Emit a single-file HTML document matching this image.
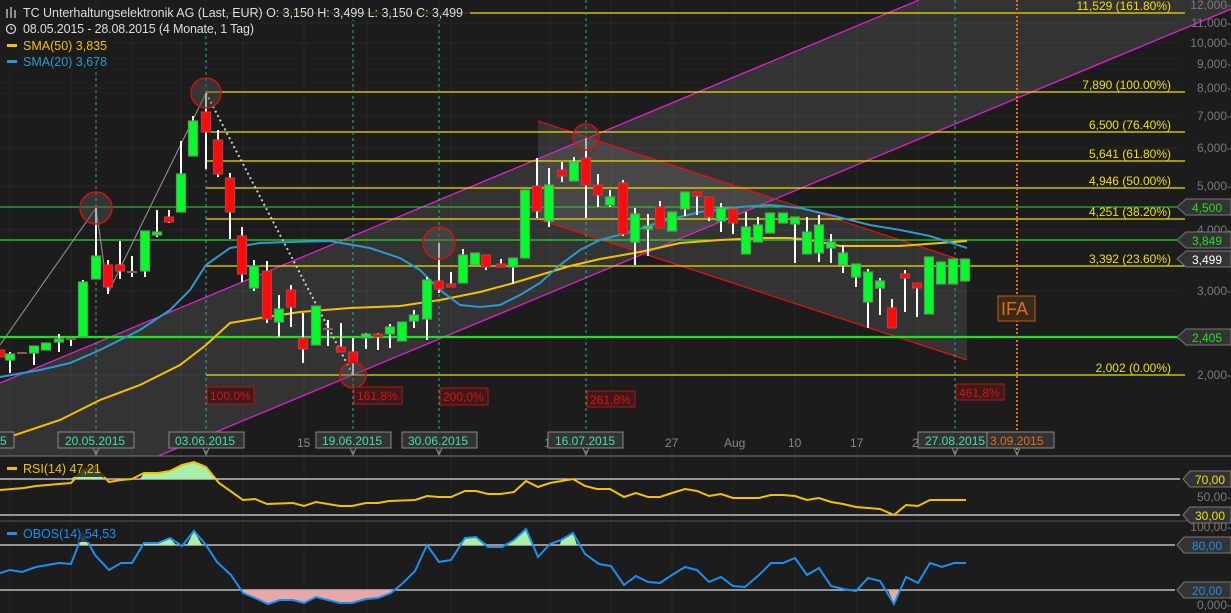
<!DOCTYPE html>
<html><head><meta charset="utf-8">
<style>
html,body{margin:0;padding:0;background:#1c1c1c;overflow:hidden;}
svg{display:block;font-family:"Liberation Sans",sans-serif;}
</style></head>
<body>
<svg id="s" width="1231" height="613" viewBox="0 0 1231 613" xmlns="http://www.w3.org/2000/svg">
<defs><clipPath id="main"><rect x="0" y="0" width="1231" height="456"/></clipPath></defs>
<rect width="1231" height="613" fill="#1c1c1c"/>
<g id="grid" stroke="#262626" stroke-width="1"></g>
<g clip-path="url(#main)">
<polygon points="0,383 919,0 1231,0 1231,9 0,522" fill="#ffffff" fill-opacity="0.1"/>
<polygon points="538,121 967,262 967,360 538,219" fill="#ffffff" fill-opacity="0.1"/>
<line x1="0" y1="383" x2="919" y2="0" stroke="#e020d0" stroke-width="1.3"/>
<line x1="0" y1="522" x2="1231" y2="9" stroke="#e020d0" stroke-width="1.3"/>
</g>
<line x1="538" y1="121" x2="967" y2="262" stroke="#e01010" stroke-width="1.3"/>
<line x1="538" y1="219" x2="967" y2="360" stroke="#e01010" stroke-width="1.3"/>
<g stroke="#f0e000" stroke-width="1.3">
<line x1="213" y1="13" x2="1185" y2="13"/>
<line x1="206" y1="92" x2="1185" y2="92"/>
<line x1="206" y1="132" x2="1185" y2="132"/>
<line x1="206" y1="161" x2="1185" y2="161"/>
<line x1="206" y1="188" x2="1185" y2="188"/>
<line x1="206" y1="219" x2="1185" y2="219"/>
<line x1="206" y1="266" x2="1185" y2="266"/>
<line x1="206" y1="375" x2="1185" y2="375"/>
</g>
<g stroke="#22e022">
<line x1="0" y1="207" x2="1180" y2="207" stroke-width="1"/>
<line x1="0" y1="240" x2="1180" y2="240" stroke-width="1.3"/>
<line x1="0" y1="337" x2="1180" y2="337" stroke-width="2.2"/>
</g>
<g stroke="#3aa890" stroke-width="1" stroke-dasharray="3,3">
<line x1="96" y1="0" x2="96" y2="455"/><line x1="206" y1="0" x2="206" y2="455"/>
<line x1="353" y1="0" x2="353" y2="455"/><line x1="439" y1="0" x2="439" y2="455"/>
<line x1="586" y1="0" x2="586" y2="455"/><line x1="955" y1="0" x2="955" y2="455"/>
</g>
<line x1="1017" y1="0" x2="1017" y2="455" stroke="#e07010" stroke-width="2" stroke-dasharray="2,2"/>
<polyline points="0,345 96,208 108,293 206,93" fill="none" stroke="#999" stroke-width="1"/>
<line x1="206" y1="93" x2="353" y2="375" stroke="#ccc" stroke-width="2" stroke-dasharray="2,3"/>
<polyline fill="none" stroke="#f5c000" stroke-width="2" points="0,440 60,420 100,400 140,385 180,365 206,345 230,323 260,318 300,312 350,308 400,306 440,300 480,292 510,284 540,275 570,266 600,259 640,252 680,243 720,240 760,238 790,238 810,240 840,246 900,246 967,241"/>
<polyline fill="none" stroke="#2a9ad0" stroke-width="2" points="0,377 40,370 70,363 100,350 140,330 170,310 190,290 206,265 230,248 260,243 290,242 330,241 370,248 400,258 420,270 440,290 460,305 480,307 500,305 520,295 540,283 560,265 580,250 600,240 630,232 660,222 700,212 740,207 770,205 800,208 830,215 850,220 870,225 900,230 930,236 967,248"/>
<g id="candles"></g>
<g fill="#555" fill-opacity="0.45" stroke="#d01010" stroke-width="1.5">
<circle cx="96" cy="208" r="16"/><circle cx="206" cy="93" r="15"/>
<circle cx="353" cy="375" r="13"/><circle cx="439" cy="243" r="16"/><circle cx="586" cy="137" r="13"/>
</g>
<g font-size="12" fill="#e01010">
<rect x="207" y="387" width="47" height="17" fill="#3a1a1a" stroke="#c01010"/><text x="210" y="400">100,0%</text>
<rect x="354" y="387" width="48" height="17" fill="#3a1a1a" stroke="#c01010"/><text x="357" y="400">161,8%</text>
<rect x="440" y="388" width="48" height="17" fill="#3a1a1a" stroke="#c01010"/><text x="443" y="401">200,0%</text>
<rect x="587" y="391" width="48" height="16" fill="#3a1a1a" stroke="#c01010"/><text x="590" y="404">261,8%</text>
<rect x="956" y="384" width="48" height="16" fill="#3a1a1a" stroke="#c01010"/><text x="959" y="397">461,8%</text>
</g>
<rect x="998" y="296" width="37" height="25" fill="#3a2a1a" stroke="#c05a10"/>
<text x="1001" y="315" font-size="18" fill="#e07010">IFA</text>
<g font-size="12" fill="#f0e000" text-anchor="end">
<text x="1171" y="10">11,529 (161.80%)</text>
<text x="1171" y="89">7,890 (100.00%)</text>
<text x="1171" y="129">6,500 (76.40%)</text>
<text x="1171" y="158">5,641 (61.80%)</text>
<text x="1171" y="185">4,946 (50.00%)</text>
<text x="1171" y="216">4,251 (38.20%)</text>
<text x="1171" y="263">3,392 (23.60%)</text>
<text x="1171" y="372">2,002 (0.00%)</text>
</g>
<g font-size="12" fill="#7a7a7a" text-anchor="end">
<text x="1231" y="9">12,000-</text><text x="1231" y="27">11,000-</text><text x="1231" y="47">10,000-</text>
<text x="1231" y="68">9,000-</text><text x="1231" y="92">8,000-</text><text x="1231" y="120">7,000-</text>
<text x="1231" y="152">6,000-</text><text x="1231" y="190">5,000-</text><text x="1231" y="234">4,000-</text>
<text x="1231" y="295">3,000-</text><text x="1231" y="379">2,000-</text>
</g>
<g font-size="12">
<path d="M1177,207 L1186,199 L1231,199 L1231,215 L1186,215 Z" fill="#333" stroke="#777"/><text x="1192" y="212" fill="#22e022">4,500</text>
<path d="M1177,240 L1186,232 L1231,232 L1231,248 L1186,248 Z" fill="#333" stroke="#777"/><text x="1192" y="245" fill="#22e022">3,849</text>
<path d="M1177,259 L1186,251 L1231,251 L1231,267 L1186,267 Z" fill="#333" stroke="#777"/><text x="1192" y="264" fill="#fff">3,499</text>
<path d="M1177,337 L1186,329 L1231,329 L1231,345 L1186,345 Z" fill="#333" stroke="#777"/><text x="1192" y="342" fill="#22e022">2,405</text>
</g>
<rect x="0" y="0" width="470" height="20" fill="#1c1c1c" fill-opacity="0.85"/>
<rect x="0" y="20" width="260" height="16" fill="#1c1c1c" fill-opacity="0.85"/>
<rect x="0" y="36" width="112" height="32" fill="#1c1c1c" fill-opacity="0.85"/>
<g stroke="#ddd" stroke-width="1.2"><line x1="7" y1="9" x2="7" y2="18"/><line x1="11" y1="7" x2="11" y2="18"/><line x1="15" y1="10" x2="15" y2="18"/></g>
<circle cx="11" cy="29" r="4.5" fill="none" stroke="#ddd" stroke-width="1.2"/><path d="M11,26.5 V29 H13" fill="none" stroke="#ddd"/>
<g font-size="12.5" fill="#ddd">
<text x="23" y="17" textLength="440" lengthAdjust="spacing">TC Unterhaltungselektronik AG (Last, EUR)  O: 3,150  H: 3,499  L: 3,150  C: 3,499</text>
<text x="23" y="33" textLength="231" lengthAdjust="spacing">08.05.2015 - 28.08.2015 (4 Monate, 1 Tag)</text>
</g>
<rect x="7" y="44" width="10" height="3" fill="#f5c000"/><text x="23" y="50" font-size="12.5" fill="#f5c000">SMA(50)  3,835</text>
<rect x="7" y="60" width="10" height="3" fill="#2a9ad0"/><text x="23" y="66" font-size="12.5" fill="#2a9ad0">SMA(20)  3,678</text>
<line x1="0" y1="456" x2="1231" y2="456" stroke="#777"/>
<g font-size="12" fill="#888"><text x="128" y="447">6</text><text x="297" y="447">15</text><text x="544" y="447">1</text><text x="665" y="447">27</text><text x="724" y="447">Aug</text><text x="788" y="447">10</text><text x="850" y="447">17</text><text x="912" y="447">2</text></g>
<g font-size="12" fill="#40e0b0">
<rect x="-1" y="432" width="15" height="16" fill="#333" stroke="#888"/><text x="0" y="445">5</text>
<rect x="58" y="432" width="76" height="16" fill="#333" stroke="#888"/><text x="65" y="445">20.05.2015</text>
<rect x="169" y="432" width="75" height="16" fill="#333" stroke="#888"/><text x="175" y="445">03.06.2015</text>
<rect x="316" y="432" width="75" height="16" fill="#333" stroke="#888"/><text x="322" y="445">19.06.2015</text>
<rect x="402" y="432" width="75" height="16" fill="#333" stroke="#888"/><text x="408" y="445">30.06.2015</text>
<rect x="548" y="432" width="75" height="16" fill="#333" stroke="#888"/><text x="555" y="445">16.07.2015</text>
<rect x="918" y="432" width="69" height="16" fill="#333" stroke="#888"/><text x="925" y="445">27.08.2015</text>
<rect x="987" y="432" width="67" height="16" fill="#333" stroke="#888"/><text x="990" y="445" fill="#e07010">3.09.2015</text>
</g>
<g fill="none" stroke="#888"><path d="M93,448 L96,455 L99,448"/><path d="M203,448 L206,455 L209,448"/><path d="M350,448 L353,455 L356,448"/><path d="M436,448 L439,455 L442,448"/><path d="M583,448 L586,455 L589,448"/><path d="M952,448 L955,455 L958,448"/><path d="M1014,448 L1017,455 L1020,448"/></g>
<line x1="0" y1="521" x2="1231" y2="521" stroke="#555"/>
<g stroke="#ddd" stroke-width="1.2"><line x1="0" y1="479" x2="1180" y2="479"/><line x1="0" y1="515" x2="1180" y2="515"/><line x1="0" y1="545" x2="1175" y2="545"/><line x1="0" y1="590" x2="1175" y2="590"/></g>
<polygon points="71,479 83,470 95,467 104,479" fill="#a8f0a8"/>
<polygon points="140,479 144,473 158,473 170,471 182,465 194,462 206,467 215,479" fill="#a8f0a8"/>
<polygon points="77,545 83,533 91,545" fill="#a8f0a8"/>
<polygon points="140,545 144,543 158,543 170,538 176,545 187,545 194,531 202,545" fill="#a8f0a8"/>
<polygon points="458,545 465,538 476,537 488,545 508,545 514,540 526,529 533,545 560,545 561,540 573,533 577,545" fill="#a8f0a8"/>
<polygon points="239,590 243,593 255,598 268,604 280,600 293,600 304,603 316,597 328,600 340,603 352,603 366,599 378,598 391,593 395,590" fill="#e8a8a8"/>
<polygon points="888,590 894,604 899,590" fill="#e8a8a8"/>
<polyline fill="none" stroke="#f5c000" stroke-width="2" points="0,490 24,488 36,486 59,484 71,483 83,470 95,467 109,482 121,480 132,479 144,473 158,473 170,471 182,465 194,462 206,467 219,483 243,500 255,499 267,504 293,503 304,506 316,502 340,506 352,506 366,503 378,503 389,501 415,500 427,496 439,497 451,497 465,491 476,491 488,494 500,494 514,492 526,481 538,487 550,483 573,479 585,486 597,489 610,489 624,497 636,493 648,497 660,497 672,493 685,489 697,491 709,496 721,494 733,498 745,498 759,498 771,495 783,495 795,496 807,500 819,498 831,502 843,504 856,507 868,508 880,509 894,515 906,505 918,506 930,500 942,500 954,500 966,500"/>
<polyline fill="none" stroke="#1a90f0" stroke-width="2" points="0,573 10,570 22,572 36,567 59,563 71,564 83,533 95,555 109,570 121,563 132,563 144,543 158,543 170,538 182,546 194,531 206,545 217,562 231,575 243,593 255,598 268,604 280,600 293,600 304,603 316,597 328,600 340,603 352,603 366,599 378,598 391,593 403,583 415,571 427,545 439,562 451,560 465,538 476,537 488,547 502,547 514,540 526,529 538,557 550,544 561,540 573,533 585,554 599,564 611,566 624,585 636,576 648,582 660,583 672,575 685,567 697,570 709,582 721,577 733,586 745,587 759,575 771,563 783,563 795,558 807,575 819,568 831,586 843,589 856,591 868,578 880,581 894,604 906,577 918,583 930,563 942,567 954,563 966,563"/>
<rect x="0" y="460" width="108" height="17" fill="#1c1c1c" fill-opacity="0.8"/>
<rect x="7" y="467" width="10" height="3" fill="#f5c000"/><text x="23" y="473" font-size="12.5" fill="#f5c000">RSI(14)  47,21</text>
<rect x="0" y="525" width="122" height="17" fill="#1c1c1c" fill-opacity="0.8"/>
<rect x="7" y="532" width="10" height="3" fill="#1a90f0"/><text x="23" y="538" font-size="12.5" fill="#1a90f0">OBOS(14)  54,53</text>
<g font-size="12">
<path d="M1183,479 L1190,471 L1231,471 L1231,487 L1190,487 Z" fill="#333" stroke="#777"/><text x="1195" y="484" fill="#f0e000">70,00</text>
<path d="M1183,515 L1190,507 L1231,507 L1231,523 L1190,523 Z" fill="#333" stroke="#777"/><text x="1195" y="520" fill="#f0e000">30,00</text>
<path d="M1177,545 L1184,537 L1231,537 L1231,553 L1184,553 Z" fill="#333" stroke="#777"/><text x="1192" y="550" fill="#1a90f0">80,00</text>
<path d="M1177,590 L1184,582 L1231,582 L1231,598 L1184,598 Z" fill="#333" stroke="#777"/><text x="1192" y="595" fill="#1a90f0">20,00</text>
<g fill="#7a7a7a" text-anchor="end"><text x="1231" y="501">50,00-</text><text x="1231" y="531">100,00-</text><text x="1231" y="609">0,000-</text></g>
</g>
</svg>
<script>
var NS="http://www.w3.org/2000/svg";
function el(t,a,p){var e=document.createElementNS(NS,t);for(var k in a)e.setAttribute(k,a[k]);p.appendChild(e);return e;}
var g=document.getElementById("grid");
[10,71,132,181,243,304,367,451,550,611,672,734,795,857,918].forEach(function(x){el("line",{x1:x,y1:0,x2:x,y2:613},g);});
[23,43,64,88,116,148,186,230,291,375].forEach(function(y){el("line",{x1:0,y1:y,x2:1180,y2:y},g);});
var d=[[0,350,357,350,357,'r'],[10,354,360,352,373,'g'],[22,352,353,352,353,'d'],[34,346,353,346,365,'g'],[46,343,350,343,350,'g'],[59,339,342,334,352,'g'],[71,338,339,338,346,'d'],[83,282,337,280,337,'g'],[96,256,279,208,279,'g'],[108,265,287,260,294,'r'],[120,265,271,241,279,'r'],[132,271,272,256,277,'d'],[145,231,271,231,277,'g'],[157,232,234,210,237,'g'],[169,217,222,210,223,'r'],[181,174,212,141,212,'g'],[193,121,156,116,156,'g'],[206,112,132,93,169,'r'],[218,140,174,130,177,'r'],[230,178,212,173,239,'r'],[242,236,274,227,282,'r'],[254,266,288,260,291,'g'],[267,271,319,261,323,'r'],[279,309,322,295,337,'g'],[291,290,307,285,327,'r'],[303,338,349,313,363,'r'],[316,306,345,306,345,'g'],[328,328,329,320,346,'d'],[341,347,352,323,352,'r'],[353,352,363,338,375,'r'],[366,334,338,333,349,'g'],[378,334,337,333,350,'r'],[390,327,334,324,348,'g'],[402,322,341,322,341,'g'],[414,315,321,310,328,'g'],[427,280,319,277,340,'g'],[439,281,289,243,293,'r'],[451,284,287,272,287,'r'],[463,255,283,249,283,'g'],[475,253,265,253,265,'g'],[486,255,267,255,270,'r'],[501,264,267,259,267,'r'],[513,258,267,258,284,'g'],[525,190,258,190,258,'g'],[537,186,211,158,218,'r'],[549,185,221,168,227,'g'],[562,170,176,162,182,'r'],[574,162,181,157,181,'g'],[586,158,185,138,218,'r'],[598,185,195,174,207,'r'],[610,197,205,190,207,'g'],[623,183,234,180,236,'r'],[635,214,242,208,265,'g'],[648,226,228,214,256,'g'],[660,207,228,201,228,'r'],[672,212,231,212,231,'g'],[685,192,209,192,216,'g'],[697,192,196,192,215,'r'],[709,197,217,197,221,'r'],[721,208,221,203,232,'g'],[733,209,223,209,234,'r'],[746,227,254,212,254,'g'],[758,225,242,217,242,'g'],[770,213,233,213,233,'g'],[783,213,223,213,223,'g'],[795,217,224,217,263,'g'],[807,232,254,217,254,'g'],[819,225,253,215,262,'g'],[831,242,248,234,263,'g'],[843,253,265,245,273,'g'],[856,264,277,264,287,'g'],[868,272,302,269,328,'g'],[880,281,288,278,315,'g'],[892,308,328,299,328,'r'],[905,274,278,270,312,'r'],[917,283,288,283,317,'r'],[929,257,314,257,314,'g'],[941,262,284,262,284,'g'],[953,259,284,259,284,'g'],[965,259,281,259,281,'g']];
var c=document.getElementById("candles");
d.forEach(function(k){
 el("line",{x1:k[0],y1:k[3],x2:k[0],y2:k[4],stroke:"#fff","stroke-width":2},c);
 if(k[5]=='d'){el("rect",{x:k[0]-5,y:k[1],width:10,height:2,fill:"#8a5a5a"},c);return;}
 var h=Math.max(k[2]-k[1],3);
 el("rect",{x:k[0]-4.5,y:k[1],width:9,height:h,fill:k[5]=='g'?"#00ff2a":"#ff0a0a",stroke:k[5]=='g'?"#5a9a5a":"#b04040","stroke-width":1.2},c);
});
</script>
</body></html>
